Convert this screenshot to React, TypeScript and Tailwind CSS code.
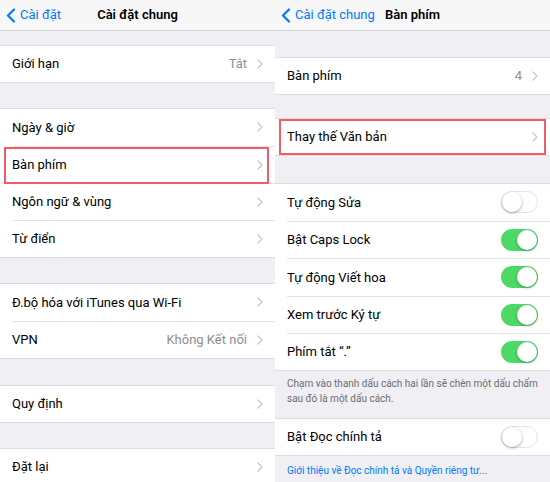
import React from 'react';

const font = { fontFamily: 'Roboto, "Noto Sans", sans-serif' };

function Chevron() {
    return (
        <svg width="6" height="10" viewBox="0 0 6 10" fill="none" className="shrink-0">
            <path d="M1 1l4 4-4 4" stroke="#c7c7cc" strokeWidth="1.3" strokeLinecap="round" strokeLinejoin="round" />
        </svg>
    );
}

function BackChevron() {
    return (
        <svg width="10" height="15" viewBox="0 0 10 15" fill="none">
            <path d="M8 1.5L2 7.5l6 6" stroke="#007aff" strokeWidth="2.2" strokeLinecap="round" strokeLinejoin="round" />
        </svg>
    );
}

function Toggle({ on }: { on: boolean }) {
    return (
        <div
            className={
                on
                    ? 'relative w-[37px] h-[22px] rounded-full bg-[#4cd964] shrink-0'
                    : 'relative w-[37px] h-[22px] rounded-full bg-white border border-[#e3e3e8] shrink-0'
            }
        >
            <div
                className={
                    on
                        ? 'absolute top-[1px] right-[1px] w-[20px] h-[20px] rounded-full bg-white shadow-[0_1px_3px_rgba(0,0,0,0.3)]'
                        : 'absolute top-0 left-0 w-[20px] h-[20px] rounded-full bg-white shadow-[0_1px_3px_rgba(0,0,0,0.35)]'
                }
            />
        </div>
    );
}

interface RowProps {
    label: string;
    value?: string;
    chevron?: boolean;
    toggle?: boolean;
    on?: boolean;
    last?: boolean;
    h: string;
    box?: string;
}

function Row({ label, value, chevron, toggle, on, last, h, box }: RowProps) {
    return (
        <div className={`relative bg-white pl-3 ${h}`}>
            <div className={`flex items-center h-full pr-3 ${last ? '' : 'border-b border-[#e2e2e6]'}`}>
                <span className="flex-1 text-[13px] text-black">{label}</span>
                {value && <span className="text-[13px] text-[#8e8e93] mr-[10px]">{value}</span>}
                {chevron && <Chevron />}
                {toggle && <Toggle on={!!on} />}
            </div>
            {box && <div className={`absolute top-0 bottom-0 border-2 border-solid border-[#f25c66] ${box}`} />}
        </div>
    );
}

function Group({ children }: { children: React.ReactNode }) {
    return <div className="border-y border-[#dcdce1]">{children}</div>;
}

function NavBar({ back, title }: { back: string; title: string }) {
    return (
        <div className="relative h-[31px] bg-[#f7f7f7] border-b border-[#d4d4d8] flex items-center pl-[6px]">
            <BackChevron />
            <span className="ml-[4px] text-[13px] text-[#007aff]">{back}</span>
            <span className="absolute inset-x-0 text-center text-[13px] font-semibold text-black pointer-events-none">
                {title}
            </span>
        </div>
    );
}

function LeftPanel() {
    return (
        <div className="w-[275px] shrink-0 bg-[#efeff4]">
            <NavBar back="Cài đặt" title="Cài đặt chung" />
            <div className="h-[14px]" />
            <Group>
                <Row label="Giới hạn" value="Tắt" chevron last h="h-[36px]" />
            </Group>
            <div className="h-[25px]" />
            <Group>
                <Row label="Ngày & giờ" chevron h="h-[37.5px]" />
                <Row label="Bàn phím" chevron h="h-[37.5px]" box="left-[4px] right-[6px]" />
                <Row label="Ngôn ngữ & vùng" chevron h="h-[37px]" />
                <Row label="Từ điển" chevron last h="h-[36px]" />
            </Group>
            <div className="h-[25px]" />
            <Group>
                <Row label="Đ.bộ hóa với iTunes qua Wi-Fi" chevron h="h-[37.5px]" />
                <Row label="VPN" value="Không Kết nối" chevron last h="h-[36px]" />
            </Group>
            <div className="h-[26px]" />
            <Group>
                <Row label="Quy định" chevron last h="h-[36px]" />
            </Group>
            <div className="h-[25px]" />
            <Group>
                <Row label="Đặt lại" chevron last h="h-[37px]" />
            </Group>
        </div>
    );
}

function RightPanel() {
    return (
        <div className="w-[275px] shrink-0 bg-[#efeff4]">
            <NavBar back="Cài đặt chung" title="Bàn phím" />
            <div className="h-[26px]" />
            <Group>
                <Row label="Bàn phím" value="4" chevron last h="h-[36px]" />
            </Group>
            <div className="h-[23px]" />
            <Group>
                <Row label="Thay thế Văn bản" chevron last h="h-[36px]" box="left-[4px] right-[4px]" />
            </Group>
            <div className="h-[27px]" />
            <Group>
                <Row label="Tự động Sửa" toggle h="h-[37.5px]" />
                <Row label="Bật Caps Lock" toggle on h="h-[37.5px]" />
                <Row label="Tự động Viết hoa" toggle on h="h-[37.5px]" />
                <Row label="Xem trước Ký tự" toggle on h="h-[37.5px]" />
                <Row label="Phím tắt “.”" toggle on last h="h-[36px]" />
            </Group>
            <div className="h-[47px] px-3 pt-[5px] text-[10px] leading-[15px] text-[#6d6d72]">
                Chạm vào thanh dấu cách hai lần sẽ chèn một dấu chấm sau đó là một dấu cách.
            </div>
            <Group>
                <Row label="Bật Đọc chính tả" toggle last h="h-[36px]" />
            </Group>
            <div className="px-3 pt-[7px] text-[10px] text-[#007aff]">
                Giới thiệu về Đọc chính tả và Quyền riêng tư...
            </div>
        </div>
    );
}

export default function App() {
    return (
        <div className="w-[550px] h-[482px] overflow-hidden flex items-start bg-[#efeff4]" style={font}>
            <LeftPanel />
            <RightPanel />
        </div>
    );
}
